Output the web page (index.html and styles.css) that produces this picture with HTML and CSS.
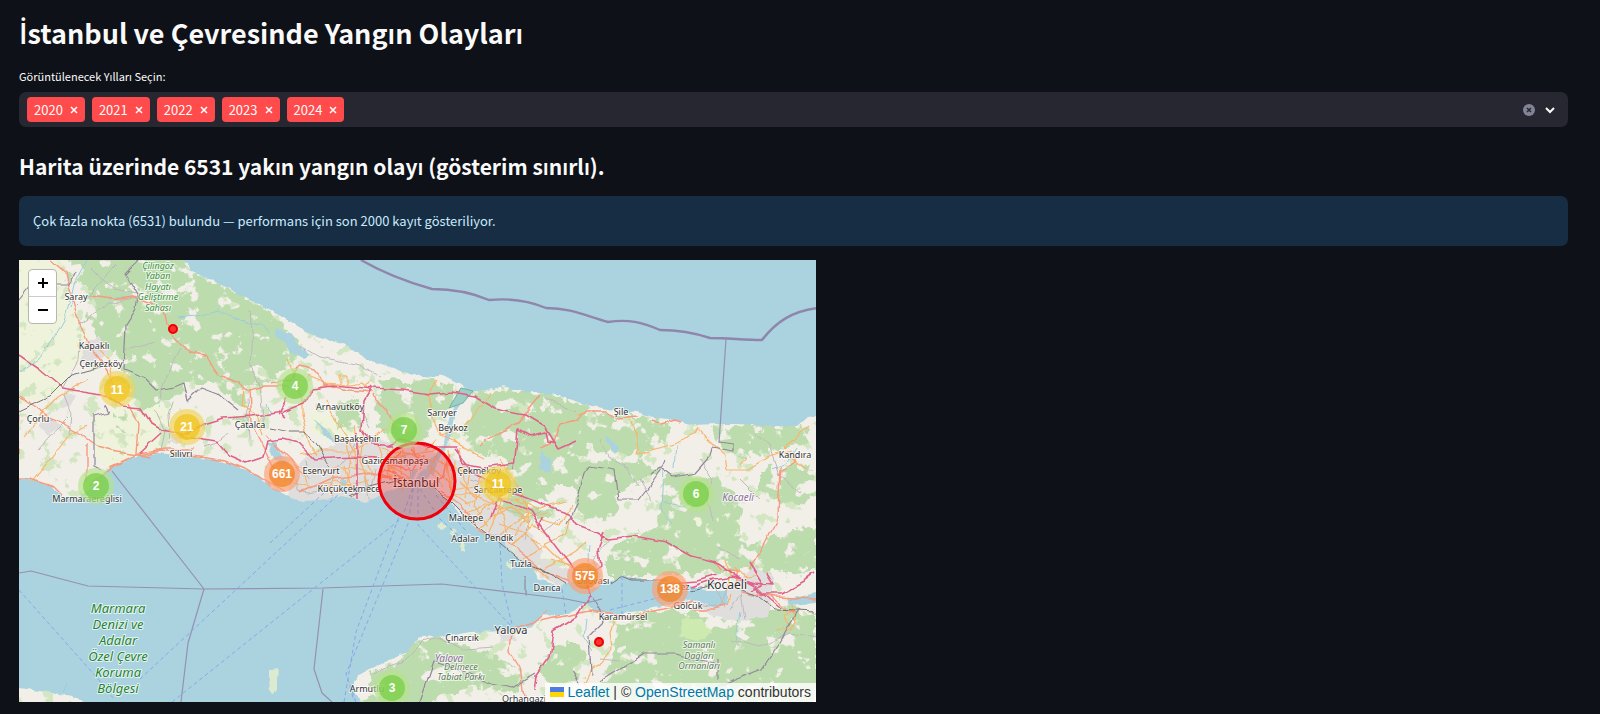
FILE: index.html
```html
<!DOCTYPE html>
<html lang="tr">
<head>
<meta charset="utf-8">
<meta name="viewport" content="width=device-width, initial-scale=1">
<title>İstanbul ve Çevresinde Yangın Olayları</title>
<link rel="stylesheet" href="styles.css">
</head>
<body>
<main class="page">
  <h1 class="title"><span class="dotted-i">İ</span>stanbul ve Çevresinde Yangın Olayları</h1>

  <div class="field">
    <label class="field-label" for="years">Görüntülenecek Yılları Seçin:</label>
    <div class="multiselect">
      <span class="tag">2020<button class="tag-x" type="button" aria-label="2020 kaldır"><svg viewBox="0 0 8 8"><path d="M1 1l6 6M7 1L1 7"/></svg></button></span>
      <span class="tag">2021<button class="tag-x" type="button" aria-label="2021 kaldır"><svg viewBox="0 0 8 8"><path d="M1 1l6 6M7 1L1 7"/></svg></button></span>
      <span class="tag">2022<button class="tag-x" type="button" aria-label="2022 kaldır"><svg viewBox="0 0 8 8"><path d="M1 1l6 6M7 1L1 7"/></svg></button></span>
      <span class="tag">2023<button class="tag-x" type="button" aria-label="2023 kaldır"><svg viewBox="0 0 8 8"><path d="M1 1l6 6M7 1L1 7"/></svg></button></span>
      <span class="tag">2024<button class="tag-x" type="button" aria-label="2024 kaldır"><svg viewBox="0 0 8 8"><path d="M1 1l6 6M7 1L1 7"/></svg></button></span>
      <input class="entry" id="years" type="text" autocomplete="off">
      <button class="icon-btn" type="button" aria-label="Tümünü temizle"><svg width="12" height="12" viewBox="0 0 12 12"><circle cx="6" cy="6" r="6" fill="#808495"/><path d="M4 4l4 4M8 4L4 8" stroke="#262730" stroke-width="1.5"/></svg></button>
      <button class="icon-btn" type="button" aria-label="Aç"><svg width="12" height="12" viewBox="0 0 12 12"><path d="M2 4l4 4 4-4" fill="none" stroke="#fafafa" stroke-width="2"/></svg></button>
    </div>
  </div>

  <h2 class="subtitle">Harita üzerinde 6531 yakın yangın olayı (gösterim sınırlı).</h2>
  <div class="alert" role="status">Çok fazla nokta (6531) bulundu — performans için son 2000 kayıt gösteriliyor.</div>

  <section class="map" aria-label="Harita">
    <svg class="tiles" viewBox="19 261 797 442" preserveAspectRatio="xMidYMid slice">
      <defs>
        <filter id="wood" x="0" y="0" width="100%" height="100%" color-interpolation-filters="sRGB">
          <feTurbulence type="fractalNoise" baseFrequency="0.09" numOctaves="3" seed="4" result="n"/>
          <feDisplacementMap in="SourceGraphic" in2="n" scale="16" xChannelSelector="R" yChannelSelector="G" result="d"/>
          <feTurbulence type="fractalNoise" baseFrequency="0.06" numOctaves="5" seed="11"/>
          <feColorMatrix values="0 0 0 0 0  0 0 0 0 0  0 0 0 0 0  16 0 0 0 -9.7" result="h"/>
          <feComposite in="d" in2="h" operator="out"/>
        </filter>
        <filter id="rough" x="-5%" y="-5%" width="110%" height="110%" color-interpolation-filters="sRGB">
          <feTurbulence type="fractalNoise" baseFrequency="0.12" numOctaves="2" seed="7"/>
          <feDisplacementMap in="SourceGraphic" scale="5" xChannelSelector="R" yChannelSelector="G"/>
        </filter>
        <filter id="wind" x="-5%" y="-5%" width="110%" height="110%" color-interpolation-filters="sRGB">
          <feTurbulence type="fractalNoise" baseFrequency="0.05" numOctaves="2" seed="15"/>
          <feDisplacementMap in="SourceGraphic" scale="7" xChannelSelector="R" yChannelSelector="G"/>
        </filter>
        <filter id="speck" x="0" y="0" width="100%" height="100%" color-interpolation-filters="sRGB">
          <feTurbulence type="fractalNoise" baseFrequency="0.07" numOctaves="4" seed="23"/>
          <feColorMatrix values="0 0 0 0 0  0 0 0 0 0  0 0 0 0 0  0 16 0 0 -9.8" result="s"/>
          <feComposite in="SourceGraphic" in2="s" operator="in"/>
        </filter>
      </defs>

      <rect x="19" y="261" width="797" height="442" fill="#f2efe9"/>
      <g fill="#f0f3dc" filter="url(#rough)">
        <path d="M19 261H66L62 290 80 320 95 345 70 372 60 395 19 405Z"/>
        <path d="M95 420l30-20 50 5-6 40-20 8-40 18-15-15Z"/>
        <path d="M310 412l30 8 20 20-20 5-30-12Z"/>
        <path d="M688 520l30-14 25 8-4 22-36 12-14-8Z"/>
      </g>
      <rect x="19" y="261" width="797" height="442" fill="#d3e6c2" filter="url(#speck)"/>

      <g fill="#bddcae" filter="url(#wood)">
        <path d="M68 255H177L192 272 262 308 284 326 302 350 290 366 268 383 245 390 249 408 233 402 213 383 187 383 173 400 143 412 133 397 127 380 123 363 100 345 84 310 90 290 70 281Z"/>
        <path d="M118 412l8 8-2 14-8-4ZM232 416l16 0 0 12-12-4Z"/>
        <path d="M372 383l62-2 18 8-6 22-14 4-6 24-30 6-16-20-8-22Z"/>
        <path d="M334 406l24-6 4 26-26 6Z"/>
        <path d="M470 397l33-8 50 6 32 12 22 10 32 0 30 8 0 14-27 12-3 12 18 8-20 14-18 10-8 20-26-6-12-22-18 0-24 18-24-14-2-32-28-6-16-16 10-20Z"/>
        <path d="M500 500l20-12 30 10 4 20-30 0-14 8Z"/>
        <path d="M712 430l40-5 45 2 12 2-2 16-34 8-34 4-20-10ZM760 470l50-4 6 30-30 10-26-14Z"/>
        <path d="M666 472l58 8 16 30-4 20 14 22-4 18-70 6-66 2-4-18 14-20 36-10 4-20Z"/>
        <path d="M575 492l30 0 14 14-16 20-24-6ZM740 548l30-8 46-14v44l-30 6-38-6Z"/>
        <path d="M620 628l22-16 36 0 32 6 22 4 24-8 30-6 30 6v90H590l14-26 10-20Z"/>
        <path d="M545 655l26-14 14 12-8 16 8 14-30 4-16-10Z"/>
        <path d="M372 676l24-15 18-18 22-4 28 7 44 16 12 12-2 20-38-6-36 6-14 12H366Z"/>
        <path d="M455 478l8-6 20 30-10 6ZM497 498l14-2 2 16-10 6Z"/>
      </g>
      <path d="M682 620l20 0 10 14-14 8-18-4Z" fill="#cdebb0" filter="url(#rough)"/>

      <g fill="#e0dddd" filter="url(#rough)">
        <path d="M84 345l14-8 12 16-12 8-18 4ZM38 424l14-4 12 8-16 8ZM170 436l12 0 0 8-12 0ZM270 448l12 4 8 14-10 2Z"/>
        <path d="M290 475l20-20 40-14 30 0 40 6 26 8 36 20 14 30 26 16 20 30-6 22-18-14-30-26-22-14-20-22-30-6-30 12-30 6-46-2-22-6Z"/>
        <path d="M690 598l34-4 30-26 20 10-6 40-40 4-30-12ZM540 560l24 10 30 0 0 12-30 6-24-10Z"/>
        <path d="M66 392l10 4-4 10-12 4ZM497 632l16 0 4 10-16 0Z"/>
      </g>

      <g fill="#aad3df" filter="url(#rough)">
        <path d="M176 251L192 272 213 282 230 290 253 302 280 317 290 322 303 332 320 338 347 347 367 360 387 367 413 376 433 378 443 376 460 385 470 393 493 390 503 387 520 392 550 395 560 397 583 405 607 410 637 413 653 418 680 422 693 426 717 425 740 425 773 427 797 427 807 418 830 416V250Z"/>
        <path d="M9 480H30L52 488 62 498 77 499 92 488 107 470 133 458 157 454 187 457 220 462 240 468 260 478 277 492 293 500 303 502 320 501 343 497 353 500 365 504 377 498 397 488 413 483 424 470 429 474 427 484 434 490 450 502 463 520 483 533 503 538 510 553 520 560 533 567 537 580 560 587 573 583 590 590 603 585 622 577 640 580 667 583 690 587 707 592 727 592 727 605 714 609 694 600 680 603 640 612 613 615 594 613 588 605 580 607 573 613 557 617 543 615 533 627 510 632 470 633 450 637 420 638 410 650 393 660 370 670 357 677 352 687 360 700 364 715H100L73 697 47 693 19 689 9 689Z"/>
        <path d="M424 474l4-10 8-10 8-8 2-18 6-16 8-16 8-6-4 10-8 12-4 22-6 14-8 12-4 16Z"/>
        <path d="M276 330l14 4 12 16 8 6-6 3-14-6-6-10-10-6ZM268 444l8 0 6 14 4 8-12-6Z"/>
        <path d="M314 420l16 14 8 12-14-10ZM340 480l6 0 2 12-6 2ZM404 484l10-14 4 1-8 15ZM606 436l14 14-4 4-10-10ZM540 452l10 8 2 14-12-4ZM788 600l28-6v10l-26 2Z"/>
      </g>
      <g fill="#dcead0" filter="url(#rough)">
        <path d="M270 671l8-1-1 9 0 12-5 3-4-6 2-8ZM441 523l5 3-4 5-4-4ZM452 530l5 2-3 4-4-3ZM460 542l5 1-1 10-4-2ZM508 562l5 4-3 5-4-4ZM512 546l4 3-3 6Z"/>
      </g>
      <path d="M461 389l12 3-10 12-14 5Z" fill="#9fcfc4" stroke="#6fb3a0"/>

      <g class="river" filter="url(#wind)">
        <path d="M19 373l20-13 14-20 10-18 6-20M70 310l6-30 16-30M178 319l20-2 20-6 22 10 20 4 10 8M664 470l-2 40 10 16M664 504l16 4 10-4M676 446l-2 24M590 545l-2 30 4 8M586 620l-2 16 10 16M740 612l-4 30M64 695l4-10M796 448l-10 16-14 6M108 300l16-2M266 404l4 12"/>
      </g>

      <g class="minor" filter="url(#wind)">
        <path d="M75 310l24-24 20-20M78 325l30-20 26-6M80 340l-2 20-16 30M90 270l24 20 28 6M126 350l30-8M160 400l6-24 14-26M155 410l10 22-4 20M38 450l20-22 10-10M64 395l8 20-2 20M250 310l2 24-2 30 10 24 4 40M248 400l2 40M170 445l-2-30 4-14M205 448l12-4 10-8M300 346l20 12 40 8 20 12M360 410l10 20M545 398l20 10 12 4M600 440l10 20 20 10 8 16M720 550l20 10M700 460l12 20-6 20 6 20M755 435l14 12 10 30 20 16M760 500l-20-20M372 675l30-12 20-20 20-4M440 640l24 10 30-2M730 640l30 8 30-14 26 4M610 540l-16 20 4 14M640 480l12 20M560 520l-14 12M600 660l20 2"/>
        <path d="M287 470l8 10 2 12 12 2 20-4 8-20 10-12 8-14M310 480l-4-20M365 476l4 24M376 470l-4 20M390 460l20-4 20 6M400 446l10 30 4-4M470 480l20 6 8 10M505 510l20 8M524 540l8-24 8-4M700 604l20 4 8-20M730 612l12-20 20 6M715 584l10 26M744 620l-6-40"/>
      </g>

      <g class="sec" filter="url(#wind)">
        <path d="M32 484l40-50 16-8M88 380l-30 18-18 20-16 20M98 350l10 10 6 20M245 390l-2 16 14 10 6 20M288 360l14 40 0 16 8 30 6 10M308 376l20 8 20 2 14-2 8 8M330 384l-12 4M340 385l0-8 6 0 0 8M364 388l10-6M328 400l4 16 14 20 8 16 2 20M352 450l20-8 14-14M355 426l4 30 16 20M300 456l20-4 34 0M305 470l4 20M335 470l-4 28M344 466l8 28M320 490l50-8M375 440l8 24-2 20M392 446l-4 24 16 20M384 460l30-6 20 8M436 380l-8 16 6 16M432 416l8 20 20 8M436 440l-10 12M440 436l24-8 16-20 10-14M454 440l10 10 20 10M460 450l4 30 12 20M450 470l40 6 20-8M455 490l30-6 26 4M466 505l30-20M472 520l28-20 20 0M480 528l30-20 20 8M490 534l12-30-6-34M500 536l20-16 26-6M512 546l22-20M500 460l20 30 10 40M515 500l20 10 30-8M524 560l22-16 20-10 4-16M540 520l20 6 10-20M545 570l30-18 10-10M545 545l20 20 20 10M552 560l24 8 18-6"/>
        <path d="M630 422l6 14 2 16-2 4 20-6 20-6 20-8 4-6M700 432l14 14 12 10 2 14 20 0 20-12 24-6M740 466l6-8M785 450l10-10 14-14M790 458l18 14M578 416l8-2M614 622l-4 14 2 14-10 14-12 8-6 12 10 12M614 622l26-8M790 606l6 16-4 8-14 2M794 610l-10 6 8 14M725 560l6 16-4 14M735 568l12 10 10-2M730 595l-2 10M390 465l-4 10 24 12M372 458l10 6M410 480l-20-12M432 466l14 14 6 10"/>
        <path d="M292 484l20 4 24-6 20 8M296 466l24 6 30-4 26 8M344 440l6 24-4 20M364 432l-4 30 10 28M350 456l30 6 20-8M380 448l30 8 24-4M386 452l10 30M402 448l-2 36M380 474l30-14M412 448l8 20M436 456l-4 18 10 14M440 462l20 8 10-6M446 452l4 40M454 462l-4 30 20 14M470 468l-4 30M480 476l-6 30 14 22M460 482l24 20 20 8M484 492l20 24 4 22M488 512l24-4 16 16M500 524l24 8 14 18M516 536l10-20M448 498l26-6M464 514l26-8M530 540l16 8M548 578l-14-10M550 536l-16-8"/>
      </g>

      <g class="prim" filter="url(#wind)">
        <path d="M50 261l16 14 10 40 12 30 14 18 8 12 8 20M90 296l30 4 14-2 20 8M162 308l4 16 12 22 12 8 16 2 12 20 22 8 10 10M250 392l14-4 26 0M19 398l28 18 30 16 20 16 14 4 40 6M87 445v36M128 404l10 22-2 28M136 456l-20 10-26 20M30 480l24 8 8 8M19 480h12M19 416l-2 40M110 468l26-12 26-4 24 4 40 6 20 8 20 12 18 10M136 454l30-4 30 0M250 392l2 32 14 28 14 28M270 385l20-4 8-14 16 4 12 14 20 6 26 2M372 396l14 14 8 20M305 476l-24-24-14-16"/>
        <path d="M300 494l30-14 44-6 22 6M380 478l24 2 8 4M384 470l20 10M400 452l-10 14 20 6 10-16M410 450l12 14M425 456l-6 14M430 488l14-12 4-20M440 492l20 14 20 26 30 12 30 26 30 12M540 396l-22 28-20 10-20 14M540 448l14-6 6-16 16-4 10-10 18 0 14 8 20-2M651 421l10 4 14-4 6 2M540 622l30-6 20-4 40 6 34-8 30-8M690 610l24 0 14-4M720 570l-6-8M816 600l-40-2-36-6M780 468l-2 50-16 32-14 20M795 458l0 6-14 8-2 20M512 632l-2 20 10 16 4 30M514 630l20-6 14-12M770 596l14 14 12 4M735 588l4-16-16-2"/>
      </g>

      <g class="moto" filter="url(#wind)">
        <path d="M19 355l20 14 24 20 20 4 24 4 14 10 20 2 10 16 10 6 22 4 20-10 20-6 30-2 30-4 20-8 10-16 20-3 40 4 30 2 26 4 22-2 24 4 20 12 30 6 20 12 14 22 18-8M161 434l-22 20M180 436l36 6 12 14 18 8 18-6 4-16 14-2 16 4 16 16 40-2 24 1M288 398l-10 18M278 413l8 6M372 388l-8 14-2 30 10 12 20 2M386 446l14-6 30 8 26 0 6 16 22 4 30-4M518 430l-4 40M454 450l20 24 24 14 30 12 40 14 8 12 22 8 10 6 26-3 32 6 26 14 24 6 24 16 12 6 10 10 20 0 24-14 8-6M604 532l-6 20 2 14-14 12 4 18-14 22-22 14-4 26-14 20-2 14M540 524l14 20 20 26 10 2 8-4M690 588l18-6 26-4 20 6 20 2-6-10M749 564l14 22-12 4M540 532l2-14M500 500l30 12 10 16M492 520l8-24M518 432l12 6 16-4 2 8 8 2M357 434l0 66"/>
        <path d="M667 584l30-2 20-6M755 586l10 10 14 12"/>
      </g>

      <g class="rail" filter="url(#wind)">
        <path d="M19 412l30-14 22-22 30-8M270 428l20 4 16 0 10 12 14 24M430 488l20 14 20 20 24 18 26 22 30 12M540 568l26 16M610 585l12-8 10 4 34 0M690 592l20-4M740 590l14 4 20 16 40 2M350 498l20-10 30-8"/>
      </g>

      <g class="prov" filter="url(#wind)">
        <path d="M19 301l16-20 12-2 6 6 16 0 6-12M138 261l-13 13 13 22-2 14-10 16-2 44 20 8 14 14 16-3 10-4 4 18 14-14 16 6 20 16M104 405l4 8-14 4 0 50 8 4M584 475l6-8 24 4 4 30 20 0 14-18 14-20M584 475l-8 30-10 20M650 476l10-8 14 10 20-4 16-18 2-8 21 4 0-7-14-2M420 703l14-40 24 8 34 14 20 4 24-14M600 683l44-28 30 0M674 655l44 10M712 690l50-20 20-30 16-30M526 577v20M590 596l16 24-16 16 2 40M572 672l8 14M718 660l0 20"/>
      </g>

      <g class="bound">
        <path class="wide" d="M361 261c24 14 46 22 71 29 20 0 38 3 57 11 20-2 38 0 57 8 24 0 38 7 62 14 20-3 34 0 52 8 18 0 32 2 50 8 18 0 34 2 52 2 14-18 30-29 56-32"/>
        <path d="M726 340l-7 104M112 472l92 118M19 574l12-2 57 15 116 3 118-1 120-4 84 10 40 5 20 4 16-4M204 590l-16 54-7 59M323 590l-9 80 8 24 10 9"/>
      </g>

      <g class="ferry">
        <path d="M19 591l80 90 14 18M140 680l200-186M172 703l230-184 12-34M270 544l56-52M344 703l12-70 44-118M356 703l-10-28 62-150 6-40M418 490v36l92 100M500 545l2 40 10 40M420 490l20 30 22 20M436 496l30 36M622 577v38M562 590l4 26M610 611l110-28M350 688l4 14"/>
      </g>

      <g class="place">
        <text x="76" y="301">Saray</text><text x="94" y="350">Kapaklı</text><text x="101" y="368">Çerkezköy</text>
        <text x="38" y="423">Çorlu</text><text x="250" y="429">Çatalca</text><text x="181" y="458">Silivri</text>
        <text x="87" y="503">Marmaraereğlisi</text><text x="340" y="411">Arnavutköy</text><text x="442" y="417">Sarıyer</text>
        <text x="453" y="432">Beykoz</text><text x="357" y="443">Başakşehir</text><text x="395" y="465">Gaziosmanpaşa</text>
        <text x="321" y="475">Esenyurt</text><text x="479" y="475">Çekmeköy</text><text x="349" y="493">Küçükçekmece</text>
        <text x="498" y="494">Sancaktepe</text><text x="466" y="522">Maltepe</text><text x="465" y="543">Adalar</text>
        <text x="499" y="542">Pendik</text><text x="521" y="568">Tuzla</text><text x="547" y="592">Darıca</text>
        <text x="593" y="585">Dilovası</text><text x="676" y="591">Körfez</text><text x="688" y="610">Gölcük</text>
        <text x="623" y="621">Karamürsel</text><text x="621" y="416">Şile</text><text x="795" y="459">Kandıra</text>
        <text x="462" y="642">Çınarcık</text><text x="367" y="693">Armutlu</text><text x="524" y="703">Orhangazi</text>
        <text class="city" x="416" y="488">İstanbul</text><text class="city" x="727" y="590">Kocaeli</text><text class="town" x="511" y="635">Yalova</text>
      </g>
      <g class="region"><text x="738" y="502">Kocaeli</text><text x="449" y="663">Yalova</text></g>
      <g class="wood-name">
        <text x="461" y="671">Delmece</text><text x="461" y="681">Tabiat Parkı</text>
        <text x="699" y="649">Samanlı</text><text x="699" y="660">Dağları</text><text x="699" y="670">Ormanları</text>
      </g>
      <g class="reserve">
        <text x="158" y="270">Çilingöz</text><text x="158" y="280">Yaban</text><text x="158" y="291">Hayatı</text><text x="158" y="301">Geliştirme</text><text x="158" y="312">Sahası</text>
      </g>
      <g class="reserve marine">
        <text x="118" y="614">Marmara</text><text x="118" y="630">Denizi ve</text><text x="118" y="646">Adalar</text><text x="118" y="662">Özel Çevre</text><text x="118" y="678">Koruma</text><text x="118" y="694">Bölgesi</text>
      </g>

      <circle class="zone" cx="417" cy="482" r="38"/>
      <g class="fire"><circle cx="173" cy="330" r="4"/><circle cx="599" cy="643" r="4"/></g>

      <g class="cluster small">
        <circle class="halo" cx="295" cy="387" r="18"/><circle cx="295" cy="387" r="13"/><text x="295" y="391">4</text>
        <circle class="halo" cx="404" cy="431" r="18"/><circle cx="404" cy="431" r="13"/><text x="404" y="435">7</text>
        <circle class="halo" cx="96" cy="487" r="18"/><circle cx="96" cy="487" r="13"/><text x="96" y="491">2</text>
        <circle class="halo" cx="696" cy="495" r="18"/><circle cx="696" cy="495" r="13"/><text x="696" y="499">6</text>
        <circle class="halo" cx="392" cy="689" r="18"/><circle cx="392" cy="689" r="13"/><text x="392" y="693">3</text>
      </g>
      <g class="cluster medium">
        <circle class="halo" cx="117" cy="390" r="18"/><circle cx="117" cy="390" r="13"/><text x="117" y="395">11</text>
        <circle class="halo" cx="187" cy="428" r="18"/><circle cx="187" cy="428" r="13"/><text x="187" y="432">21</text>
        <circle class="halo" cx="498" cy="485" r="18"/><circle cx="498" cy="485" r="13"/><text x="498" y="489">11</text>
      </g>
      <g class="cluster large">
        <circle class="halo" cx="282" cy="475" r="18"/><circle cx="282" cy="475" r="13"/><text x="282" y="479">661</text>
        <circle class="halo" cx="585" cy="577" r="18"/><circle cx="585" cy="577" r="13"/><text x="585" y="581">575</text>
        <circle class="halo" cx="670" cy="590" r="18"/><circle cx="670" cy="590" r="13"/><text x="670" y="594">138</text>
      </g>
    </svg>

    <div class="zoom">
      <button type="button" aria-label="Yakınlaştır"><svg width="12" height="12" viewBox="0 0 12 12"><path d="M6 1v10M1 6h10"/></svg></button>
      <button type="button" aria-label="Uzaklaştır"><svg width="12" height="12" viewBox="0 0 12 12"><path d="M1 6h10"/></svg></button>
    </div>
    <div class="credit">
      <a href="#leaflet"><svg width="14" height="10" viewBox="0 0 14 10"><path fill="#4c7be1" d="M0 0h14v5H0z"/><path fill="#ffd500" d="M0 5h14v5H0z"/></svg> Leaflet</a> | © <a href="#osm">OpenStreetMap</a> contributors
    </div>
  </section>
</main>
</body>
</html>
```
FILE: styles.css
```css
* { box-sizing: border-box; }

body {
  margin: 0;
  background: #0e1117;
  color: #fafafa;
  font-family: "Noto Sans CJK SC", "Noto Sans", sans-serif;
}

.page {
  display: flex;
  flex-direction: column;
  padding: 11px 32px 10px 19px;
}

.title {
  margin: 0;
  font-size: 27px;
  line-height: 44px;
  font-weight: 600;
}

.dotted-i {
  font-family: "Open Sans", sans-serif;
  font-size: 28px;
}

.field {
  display: flex;
  flex-direction: column;
  gap: 6px;
  margin-top: 11px;
}

.field-label {
  font-size: 11px;
  line-height: 20px;
}

.multiselect {
  display: flex;
  align-items: center;
  gap: 7px;
  height: 35px;
  padding: 0 12px 0 8px;
  border-radius: 7px;
  background: #262730;
}

.tag {
  display: flex;
  align-items: center;
  gap: 7px;
  height: 25px;
  padding: 0 7px;
  border-radius: 4px;
  background: #ff4b4b;
  font-size: 13px;
  line-height: 24px;
}

.tag-x,
.icon-btn {
  display: flex;
  padding: 0;
  border: 0;
  background: none;
}

.tag-x svg {
  width: 8px;
  height: 8px;
  fill: none;
  stroke: #fff;
  stroke-width: 1.5;
}

.entry {
  flex: 1;
  min-width: 0;
  border: 0;
  outline: 0;
  background: none;
  color: inherit;
  font: inherit;
}

.icon-btn + .icon-btn { margin-left: 2px; }

.subtitle {
  margin: 21px 0 0;
  font-size: 21px;
  line-height: 36px;
  font-weight: 600;
}

.alert {
  margin-top: 12px;
  padding: 14px;
  border-radius: 7px;
  background: #172d43;
  color: #c7ebff;
  font-size: 13px;
  line-height: 22px;
}

.map {
  position: relative;
  width: 797px;
  max-width: 100%;
  margin-top: 14px;
  overflow: hidden;
  background: #ddd;
}

.tiles {
  display: block;
  width: 100%;
  fill: none;
  font-family: "Noto Sans", sans-serif;
}

.tiles text { text-anchor: middle; }
.tiles path { stroke-linejoin: round; }

.river { stroke: #9ccbdc; stroke-width: 1; }
.minor { stroke: #bdb9bb; stroke-width: 1; }
.sec { stroke: #f8b56a; stroke-width: 1.2; }
.prim { stroke: #f79a7d; stroke-width: 1.4; }
.moto { stroke: #e0628a; stroke-width: 1.6; }
.rail { stroke: #77736f; stroke-width: 1; }
.prov { stroke: #94869b; stroke-width: 1.2; }
.bound { stroke: #9690b1; stroke-width: 1.2; }
.bound .wide { stroke: #8f86aa; stroke-width: 2.4; }
.ferry { stroke: #86a9e8; stroke-width: 1; stroke-dasharray: 4 3; }

.place text,
.region text,
.wood-name text,
.reserve text {
  paint-order: stroke;
  stroke: rgba(255, 255, 255, 0.7);
  stroke-width: 2px;
  stroke-linejoin: round;
}

.place { fill: #333; font-size: 9px; }
.place .town { font-size: 11px; }
.place .city { font-size: 12px; }
.region { fill: #8d6f9b; font-size: 10px; font-style: italic; }
.wood-name { fill: #5d7a58; font-size: 9px; font-style: italic; }
.reserve { fill: #3a9140; font-size: 9px; font-style: italic; }
.marine { fill: #1f8530; font-size: 13px; }

.zone { fill: #f00; fill-opacity: 0.25; stroke: #f0000a; stroke-width: 3; }
.fire circle { fill: #ff3030; stroke: #f00000; stroke-width: 2; }

.cluster text {
  fill: #fff;
  font: bold 12px "Liberation Sans", sans-serif;
}
.small { fill: rgba(110, 204, 57, 0.65); }
.small .halo { fill: rgba(181, 226, 140, 0.65); }
.medium { fill: rgba(240, 194, 12, 0.65); }
.medium .halo { fill: rgba(241, 211, 87, 0.65); }
.large { fill: rgba(241, 128, 23, 0.65); }
.large .halo { fill: rgba(253, 156, 115, 0.65); }

.zoom {
  position: absolute;
  top: 9px;
  left: 9px;
  display: flex;
  flex-direction: column;
  border: 1px solid #b5b8b0;
  border-radius: 4px;
  background: #fff;
}

.zoom button {
  display: grid;
  place-items: center;
  width: 27px;
  height: 26px;
  padding: 0;
  border: 0;
  background: none;
}

.zoom button + button { height: 27px; border-top: 1px solid #ccc; }
.zoom path { stroke: #000; stroke-width: 2; }

.credit {
  position: absolute;
  right: 0;
  bottom: 0;
  padding: 0 5px;
  background: rgba(255, 255, 255, 0.8);
  color: #333;
  font: 14px/19px "Liberation Sans", sans-serif;
}

.credit a { color: #0078a8; text-decoration: none; }
```
